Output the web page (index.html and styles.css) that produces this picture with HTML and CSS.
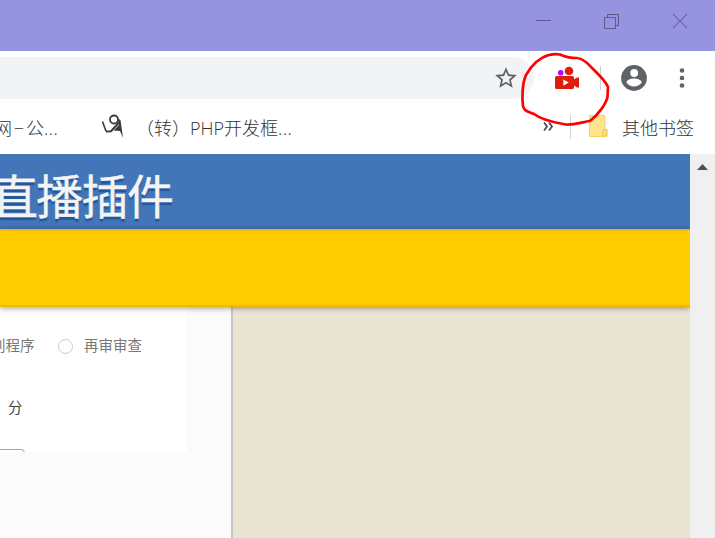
FILE: index.html
```
<!DOCTYPE html>
<html lang="zh-CN">
<head>
<meta charset="utf-8">
<title>直播插件</title>
<link rel="stylesheet" href="styles.css">
</head>
<body>
<header class="titlebar">
  <svg width="16" height="16" viewBox="0 0 16 16"><path d="M0 7.500h15" stroke="#5c5b8c"/></svg>
  <svg width="16" height="16" viewBox="0 0 16 16" fill="none" stroke="#5c5b8c"><path d="M.5 4.500h11v11h-11zM3.500 4V1.500h11v11H12"/></svg>
  <svg width="16" height="16" viewBox="0 0 16 16" fill="none" stroke="#706db0"><path d="M1 1l14 14M15 1L1 15" stroke-width="1.200"/></svg>
</header>
<div class="toolbar">
  <div class="omnibox">
    <svg width="26" height="26" viewBox="0 0 24 24" fill="#5f6368"><path d="M22 9.240l-7.190-.62L12 2 9.190 8.630 2 9.240l5.460 4.730L5.820 21 12 17.270 18.180 21l-1.630-7.030zM12 15.400l-3.760 2.270 1-4.280-3.320-2.880 4.380-.38L12 6.100l1.710 4.040 4.380.38-3.320 2.880 1 4.280z"/></svg>
  </div>
  <svg class="camera" width="26" height="24" viewBox="0 0 26 24"><g fill="#df1d0b"><circle cx="15" cy="5" r="4.300"/><rect x="1" y="10" width="19" height="13" rx="1.600"/><path d="M19 14l4-2.500h2v10h-2l-4-2.500z"/></g><circle cx="6.700" cy="6.700" r="2.800" fill="#b800ff"/><path d="M9.300 13.500v6.200l5.500-3.100z" fill="#fff"/></svg>
  <i class="rule"></i>
  <svg class="avatar" width="26" height="26" viewBox="0 0 26 26"><circle cx="13" cy="13" r="12.900" fill="#5f6368"/><circle cx="13.200" cy="8" r="3.900" fill="#fff"/><path d="M5.400 17.500c.3-2.700 4.600-4 7.700-4s7.400 1.300 7.700 4c-4 5.300-11.500 5.300-15.400 0z" fill="#fff"/></svg>
  <svg class="dots" width="6" height="22" viewBox="0 0 6 22" fill="#5f6368"><circle cx="3" cy="3.500" r="2.300"/><circle cx="3" cy="11" r="2.300"/><circle cx="3" cy="18.500" r="2.300"/></svg>
</div>
<nav class="bookmarks">
  <span class="first">网<b>−</b>公<em>...</em></span>
  <svg class="figure" width="24" height="26" viewBox="0 0 24 26" fill="none" stroke="#3e3a39"><circle cx="13" cy="6.500" r="4" stroke-width="1.800"/><path d="M1.500 8.500l3.500 9.800" stroke-width="1.600"/><path d="M5 18.500l5-.3 8-8.700" stroke-width="2"/><path d="M17 5.500L19.500 7 22 25l-3-7-6.500-.5L18 12z" fill="#3e3a39" stroke="none"/></svg>
  <span class="second">（转）PHP开发框<em>...</em></span>
  <svg class="more" width="11" height="12" viewBox="0 0 11 12" fill="none" stroke="#4b4e52" stroke-width="1.800"><path d="M1 1.500l3 4-3 4M6 1.500l3 4-3 4"/></svg>
  <i class="rule"></i>
  <svg class="folder" width="19" height="22" viewBox="0 0 19 22"><path d="M.5 .5h15.500v14h2v7H.5z" fill="#ffe48b" stroke="#f9d45c"/><path d="M14 21v-5q0-1.500 1.500-1.500t2 1.500v3.500q0 1.500-2 1.500" fill="#ffe48b" stroke="#edc34d" stroke-width="1.200"/></svg>
  <span class="other">其他书签</span>
</nav>
<div class="viewport">
  <main class="page">
    <div class="hero"><h1>直播插件</h1></div>
    <div class="band"></div>
    <div class="body">
      <section class="panel">
        <div class="card">
          <div class="options"><span class="prev">别程序</span><i class="radio"></i><span>再审审查</span></div>
          <div class="minute">分</div>
          <div class="button"></div>
        </div>
      </section>
    </div>
  </main>
  <aside class="scrollbar"><svg width="12" height="6" viewBox="0 0 12 6"><path d="M0 6l5.500-6L11 6z" fill="#505050"/></svg></aside>
</div>
<svg class="ring" width="96" height="82" viewBox="517 48 96 82" fill="none" stroke="#f00" stroke-width="2.700" stroke-linecap="round" stroke-linejoin="round"><path d="M577 58C569 58 565 57 560 54.500C547 52 536 61 531 67.500L526 75C522 84 522 98 523 106C524 112 530 112 534 114C543 121 558 123 566 124.500C577 125 586 121 590 121C598 115 606 104 607.500 97L608 87C605 80 597 73 592 68C587 63 584 59 579 58.500"/></svg>
</body>
</html>
```
FILE: styles.css
```
* { box-sizing: border-box; }
body {
  margin: 0;
  width: 715px;
  height: 538px;
  overflow: hidden;
  position: relative;
  background: #fff;
  font-family: "Open Sans", "Noto Sans CJK SC", sans-serif;
}
svg { display: block; flex: none; }
.titlebar {
  height: 51px;
  background: #9693e1;
  display: flex;
  justify-content: flex-end;
  gap: 52px;
  padding: 13px 27px 0 0;
}
.toolbar {
  height: 53px;
  display: flex;
  align-items: center;
}
.omnibox {
  width: 534px;
  height: 42px;
  background: #f1f3f4;
  border-radius: 0 21px 21px 0;
  display: flex;
  align-items: center;
  justify-content: flex-end;
  padding-right: 15px;
}
.rule { width: 1px; height: 24px; background: #cfd1d4; flex: none; }
.camera { margin: 0 20px; }
.avatar { margin-left: 20px; }
.dots { margin-left: 32px; }
.bookmarks {
  height: 50px;
  display: flex;
  align-items: center;
  font-size: 18px;
  line-height: 24px;
  color: #303336;
  white-space: nowrap;
}
.bookmarks span { flex: none; font-weight: 300; margin-top: -3px; }
.bookmarks b { display: inline-block; width: 14px; text-align: center; font-weight: 300; }
.bookmarks em { font-style: normal; letter-spacing: .5px; }
.bookmarks .first { width: 107px; margin-left: -6px; }
.figure { margin-top: -7px; }
.bookmarks .second { margin-left: 11px; width: 407px; }
.more { margin: -5px 16px 0 0; }
.bookmarks .rule { margin-top: -5px; }
.folder { margin: -7px 14px 0 18px; }
.viewport { height: 384px; display: flex; }
.page { width: 690px; display: flex; flex-direction: column; overflow: hidden; }
.scrollbar { width: 25px; background: #f0f0f0; padding: 10px 0 0 7px; }
.hero { height: 75px; background: #4276b8; flex: none; }
h1 {
  margin: 0 0 0 -9px;
  padding-top: 8px;
  font-size: 47px;
  line-height: 68px;
  letter-spacing: -1.7px;
  font-weight: 400;
  color: #f4f4f4;
  -webkit-text-stroke: .4px #f4f4f4;
  white-space: nowrap;
  text-shadow: 0 3px 1px #23569a;
}
.band {
  height: 78px;
  flex: none;
  background: #fc0;
  border-top: 2px solid #f2b70a;
  border-bottom: 2px solid #f2b70a;
  box-shadow: 0 1px 6px rgba(0, 0, 0, .4);
  z-index: 1;
}
.body { flex: 1; background: #eae5d3; }
.panel {
  width: 233px;
  height: 100%;
  background: #fbfbfb;
  border-right: 2px solid #c6c7ca;
}
.card {
  width: 187px;
  height: 145px;
  background: #fff;
  overflow: hidden;
  font-size: 14.5px;
  line-height: 20px;
  color: #777;
}
.options { display: flex; align-items: center; padding-top: 29px; margin-left: -9px; }
.prev { width: 67px; }
.radio { width: 15px; height: 15px; border: 1px solid #ccc; border-radius: 50%; margin-right: 11px; }
.minute { margin: 42px 0 0 8px; color: #444; }
.button { width: 45px; height: 30px; margin: 31px 0 0 -20px; border: 1px solid #f58585; border-radius: 4px; }
.ring { position: absolute; left: 517px; top: 48px; }
```
